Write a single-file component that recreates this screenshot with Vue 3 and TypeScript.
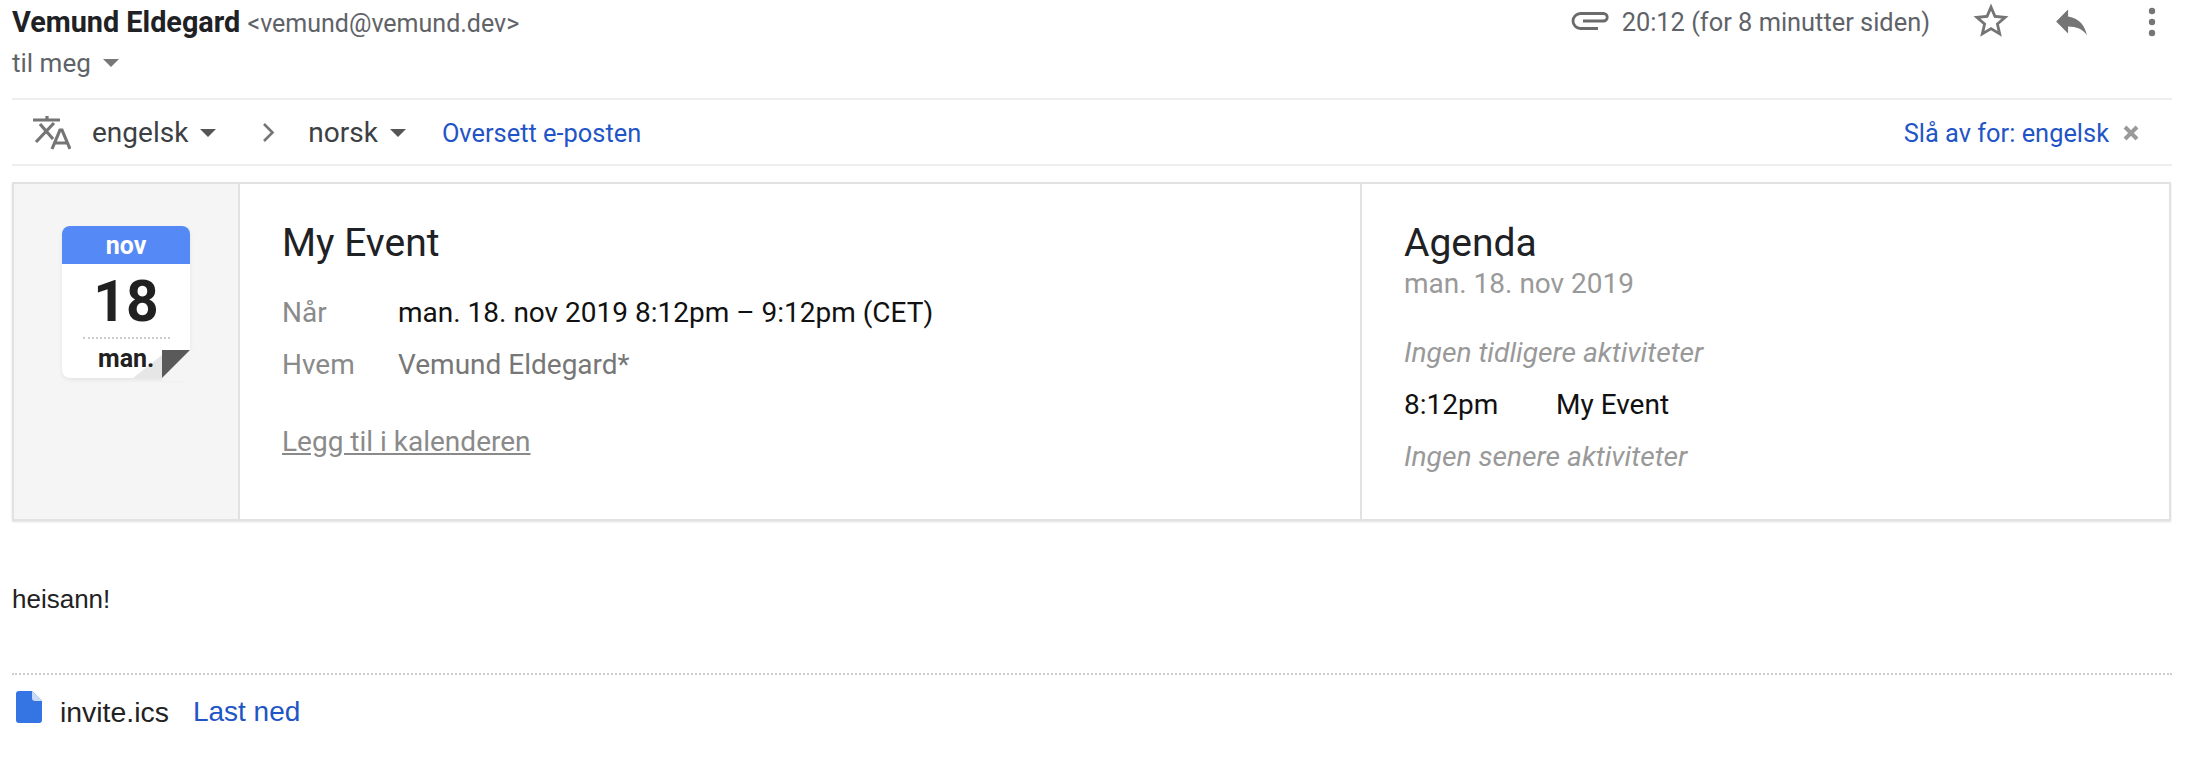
<script setup lang="ts">
const rows = [
  { label: 'Når', value: 'man. 18. nov 2019 8:12pm – 9:12pm (CET)', dark: true },
  { label: 'Hvem', value: 'Vemund Eldegard*', dark: false },
]
</script>

<template>
  <div class="mail">
    <header class="head">
      <div class="who">
        <div class="from"><b>Vemund Eldegard</b> <span class="addr">&lt;vemund@vemund.dev&gt;</span></div>
        <div class="to">til meg <i class="caret"></i></div>
      </div>
      <div class="meta">
        <svg class="clip" width="38" height="20" viewBox="0 0 38 20"><path d="M27 17.500H9.500a7.500 7.500 0 0 1 0-15H32.500a3.700 3.700 0 0 1 0 7.500H12" fill="none" stroke="#6b6b6b" stroke-width="2.800"/></svg>
        <span class="time">20:12 (for 8 minutter siden)</span>
        <svg class="star" width="42" height="42" viewBox="0 0 24 24"><path d="M22 9.240l-7.190-.62L12 2 9.190 8.630 2 9.240l5.460 4.730L5.820 21 12 17.270 18.180 21l-1.630-7.030L22 9.240zM12 15.400l-3.760 2.270 1-4.280-3.320-2.880 4.380-.38L12 6.100l1.710 4.040 4.380.38-3.320 2.880 1 4.280L12 15.400z" fill="#757575"/></svg>
        <svg class="reply" width="41" height="41" viewBox="0 0 24 24"><path d="M10 9V5l-7 7 7 7v-4.100c5 0 8.500 1.600 11 5.100-1-5-4-10-11-11z" fill="#757575"/></svg>
        <svg class="more" width="12" height="32" viewBox="0 0 12 32"><circle cx="6" cy="4" r="3.200" fill="#757575"/><circle cx="6" cy="15" r="3.200" fill="#757575"/><circle cx="6" cy="26" r="3.200" fill="#757575"/></svg>
      </div>
    </header>

    <div class="translate">
      <svg class="tr-icon" width="38" height="36" viewBox="0 0 38 36"><g fill="none" stroke="#757575" stroke-width="3.200"><path d="M0 5h27M14 1v4M7 9l13 15M21 8L3 27"/><path d="M19 34l8-19h2l8 19M22 28h12"/></g></svg>
      <span class="lang l1">engelsk</span><i class="caret dark"></i>
      <svg class="chev" width="13" height="21" viewBox="0 0 13 21"><path d="M2 2l8.500 8.500L2 19" fill="none" stroke="#757575" stroke-width="2.600"/></svg>
      <span class="lang">norsk</span><i class="caret dark"></i>
      <a class="link go">Oversett e-posten</a>
      <span class="spacer"></span>
      <a class="link">Slå av for: engelsk</a>
      <svg class="x" width="16" height="16" viewBox="0 0 16 16"><path d="M2 2l12 12M14 2L2 14" stroke="#9a9a9a" stroke-width="4"/></svg>
    </div>

    <section class="card">
      <div class="date">
        <div class="cal">
          <div class="month">nov</div>
          <div class="day">18</div>
          <div class="dots"></div>
          <div class="wd">man.</div>
          <svg class="fold" width="60" height="31" viewBox="0 0 60 31">
            <path d="M57 0H60V31H29V28H57z" fill="#f5f5f5"/>
            <path d="M57 0V28H29z" fill="#f5f5f5"/>
            <path d="M0 28L29 5V28z" fill="#e6e6e6"/>
            <path d="M29 0H57L29 28z" fill="#5a5a5a"/>
          </svg>
        </div>
      </div>
      <div class="event">
        <h2>My Event</h2>
        <div v-for="r in rows" :key="r.label" class="row">
          <span class="label">{{ r.label }}</span>
          <span :class="r.dark ? 'v-dark' : 'v-grey'">{{ r.value }}</span>
        </div>
        <a class="add">Legg til i kalenderen</a>
      </div>
      <div class="agenda">
        <h2>Agenda</h2>
        <div class="ag-date">man. 18. nov 2019</div>
        <div class="none first">Ingen tidligere aktiviteter</div>
        <div class="ag-row"><span class="ag-time">8:12pm</span><span>My Event</span></div>
        <div class="none">Ingen senere aktiviteter</div>
      </div>
    </section>

    <p class="body">heisann!</p>

    <footer class="att">
      <svg width="26" height="32" viewBox="0 0 26 32"><path d="M3 0h13l10 10v19a3 3 0 0 1-3 3H3a3 3 0 0 1-3-3V3a3 3 0 0 1 3-3z" fill="#3574e3"/><path d="M16 0l10 10h-7a3 3 0 0 1-3-3z" fill="#c9dbf9"/></svg>
      <span class="fname">invite.ics</span>
      <a class="dl">Last ned</a>
    </footer>
  </div>
</template>

<style>
html, body { margin: 0; background: #fff; }
</style>

<style scoped>
.mail {
  padding-left: 12px;
  width: 2160px;
  height: 770px;
  overflow: hidden;
  font-family: Roboto, sans-serif;
}
.head {
  display: flex;
  justify-content: space-between;
  height: 98px;
  border-bottom: 2px solid #eeeeee;
}
.from { font-size: 28.800px; line-height: 28px; margin-top: 8px; color: #202124; }
.from b { font-weight: 700; }
.addr { font-size: 25px; color: #5f6368; }
.to { font-size: 26px; line-height: 28px; margin-top: 11px; color: #5f6368; display: flex; align-items: center; }
.caret {
  display: inline-block;
  width: 0; height: 0;
  border-left: 8px solid transparent;
  border-right: 8px solid transparent;
  border-top: 8px solid #777;
  margin-left: 12px;
}
.caret.dark { border-top-color: #555; }
.meta { display: flex; align-items: flex-start; height: 44px; }
.clip { margin-top: 11px; }
.time { font-size: 25.400px; line-height: 32px; color: #5f6368; margin: 6px 40px 0 13px; }
.reply { margin-left: 39px; margin-top: 1px; }
.more { margin: 7px 14px 0 54px; }
.translate {
  display: flex;
  align-items: center;
  height: 63px;
  border-bottom: 2px solid #eeeeee;
  padding: 1px 33px 0 21px;
  font-size: 28px;
}
.lang { color: #3c4043; }
.l1 { margin-left: 21px; }
.chev { margin: 0 33px 0 46px; }
.link { color: #1f55c6; font-size: 25.400px; }
.go { margin-left: 36px; }
.spacer { flex: 1; }
.x { margin-left: 14px; }
.card {
  display: flex;
  margin-top: 16px;
  height: 335px;
  width: 2155px;
  border: 2px solid #e2e2e2;
  box-shadow: 0 1px 2px rgba(0,0,0,.12);
}
.date { width: 226px; background: #f5f5f5; border-right: 2px solid #e2e2e2; padding: 42px 0 0 48px; box-sizing: border-box; }
.cal {
  position: relative;
  width: 128px;
  height: 152px;
  background: #fff;
  border-radius: 8px;
  box-shadow: 0 2px 4px rgba(0,0,0,.07);
  text-align: center;
  color: #212121;
  font-weight: 700;
}
.month { height: 38px; padding-top: 2px; box-sizing: border-box; line-height: 36px; background: #5589f5; color: #fff; font-size: 25px; border-radius: 8px 8px 0 0; }
.day { font-size: 57px; line-height: 64px; margin-top: 6px; }
.dots { margin: 3px 20px 0 21px; border-top: 2px dotted #ccc; }
.wd { position: relative; z-index: 1; font-size: 25px; line-height: 30px; margin-top: 5px; text-align: left; padding-left: 36px; }
.fold { position: absolute; right: -3px; bottom: -3px; }
.event { width: 1122px; padding: 35px 0 0 42px; box-sizing: border-box; border-right: 2px solid #e2e2e2; }
.agenda { flex: 1; padding: 35px 0 0 42px; box-sizing: border-box; }
h2 { margin: 0; font-size: 39px; font-weight: 400; line-height: 48px; color: #202124; }
.row { display: flex; font-size: 28px; line-height: 32px; margin-top: 30px; color: #8a8a8a; }
.row + .row { margin-top: 20px; }
.label { width: 116px; }
.v-dark { color: #111; }
.v-grey { color: #777; }
.add { display: block; margin-top: 45px; font-size: 28px; line-height: 32px; color: #8a8a8a; text-decoration: underline; }
.ag-date { font-size: 28px; line-height: 32px; color: #999; margin-top: 1px; }
.none { font-size: 28.200px; line-height: 32px; font-style: italic; color: #999; margin-top: 20px; }
.none.first { margin-top: 37px; }
.ag-row { display: flex; font-size: 28px; line-height: 32px; color: #111; margin-top: 20px; }
.ag-time { width: 152px; flex: none; }
.body { margin: 63px 0 0; font-family: "Liberation Sans", Arial, sans-serif; font-size: 26px; line-height: 30px; color: #222; }
.att {
  display: flex;
  align-items: flex-start;
  margin-top: 59px;
  padding: 16px 0 0 4px;
  border-top: 2px dotted #ccc;
  font-family: "Liberation Sans", Arial, sans-serif;
  font-size: 28px;
  line-height: 32px;
}
.fname { margin: 5px 0 0 18px; color: #222; font-size: 28.400px; }
.dl { margin: 5px 0 0 24px; color: #1f55c6; }
</style>
